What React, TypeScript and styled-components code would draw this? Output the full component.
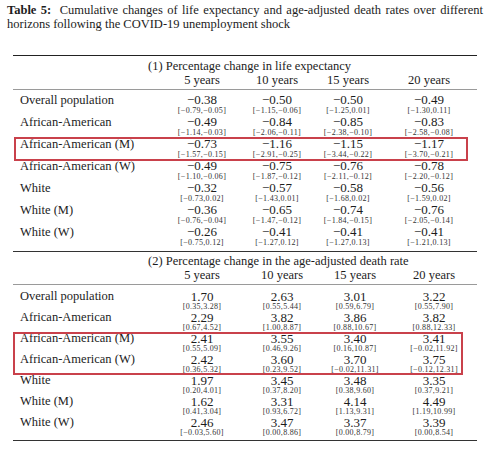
import React from 'react';
import styled, { createGlobalStyle } from 'styled-components';

type Cell = [string, string];

interface RowData {
  label: string;
  cells: Cell[];
}

const M = '\u2212';

const lifeRows: RowData[] = [
  { label: 'Overall population', cells: [[`${M}0.38`, `[${M}0.79,${M}0.05]`], [`${M}0.50`, `[${M}1.15,${M}0.06]`], [`${M}0.50`, `[${M}1.25,0.01]`], [`${M}0.49`, `[${M}1.30,0.11]`]] },
  { label: 'African-American', cells: [[`${M}0.49`, `[${M}1.14,${M}0.03]`], [`${M}0.84`, `[${M}2.06,${M}0.11]`], [`${M}0.85`, `[${M}2.38,${M}0.10]`], [`${M}0.83`, `[${M}2.58,${M}0.08]`]] },
  { label: 'African-American (M)', cells: [[`${M}0.73`, `[${M}1.57,${M}0.15]`], [`${M}1.16`, `[${M}2.91,${M}0.25]`], [`${M}1.15`, `[${M}3.44,${M}0.22]`], [`${M}1.17`, `[${M}3.70,${M}0.21]`]] },
  { label: 'African-American (W)', cells: [[`${M}0.49`, `[${M}1.10,${M}0.06]`], [`${M}0.75`, `[${M}1.87,${M}0.12]`], [`${M}0.76`, `[${M}2.11,${M}0.12]`], [`${M}0.78`, `[${M}2.20,${M}0.12]`]] },
  { label: 'White', cells: [[`${M}0.32`, `[${M}0.73,0.02]`], [`${M}0.57`, `[${M}1.43,0.01]`], [`${M}0.58`, `[${M}1.68,0.02]`], [`${M}0.56`, `[${M}1.59,0.02]`]] },
  { label: 'White (M)', cells: [[`${M}0.36`, `[${M}0.76,${M}0.04]`], [`${M}0.65`, `[${M}1.47,${M}0.12]`], [`${M}0.74`, `[${M}1.84,${M}0.15]`], [`${M}0.76`, `[${M}2.05,${M}0.14]`]] },
  { label: 'White (W)', cells: [[`${M}0.26`, `[${M}0.75,0.12]`], [`${M}0.41`, `[${M}1.27,0.12]`], [`${M}0.41`, `[${M}1.27,0.13]`], [`${M}0.41`, `[${M}1.21,0.13]`]] },
];

const deathRows: RowData[] = [
  { label: 'Overall population', cells: [['1.70', '[0.35,3.28]'], ['2.63', '[0.55,5.44]'], ['3.01', '[0.59,6.79]'], ['3.22', '[0.55,7.90]']] },
  { label: 'African-American', cells: [['2.29', '[0.67,4.52]'], ['3.82', '[1.00,8.87]'], ['3.86', '[0.88,10.67]'], ['3.82', '[0.88,12.33]']] },
  { label: 'African-American (M)', cells: [['2.41', '[0.55,5.09]'], ['3.55', '[0.46,9.26]'], ['3.40', '[0.16,10.87]'], ['3.41', `[${M}0.02,11.92]`]] },
  { label: 'African-American (W)', cells: [['2.42', '[0.36,5.32]'], ['3.60', '[0.23,9.52]'], ['3.70', `[${M}0.02,11.31]`], ['3.75', `[${M}0.12,12.31]`]] },
  { label: 'White', cells: [['1.97', '[0.20,4.01]'], ['3.45', '[0.37,8.20]'], ['3.48', '[0.38,9.60]'], ['3.35', '[0.37,9.21]']] },
  { label: 'White (M)', cells: [['1.62', '[0.41,3.04]'], ['3.31', '[0.93,6.72]'], ['4.14', '[1.13,9.31]'], ['4.49', '[1.19,10.99]']] },
  { label: 'White (W)', cells: [['2.46', `[${M}0.03,5.60]`], ['3.47', '[0.00,8.86]'], ['3.37', '[0.00,8.79]'], ['3.39', '[0.00,8.54]']] },
];

const horizons = ['5 years', '10 years', '15 years', '20 years'];

const lifeCols = '152px 74px 76px 66px 96px';
const deathCols = '152px 74px 86px 60px 98px';

const GlobalStyle = createGlobalStyle`
  body {
    margin: 0;
    background: #fff;
    color: #1c1c1c;
    font-family: "Liberation Serif", "DejaVu Serif", serif;
  }
`;

const Page = styled.div`
  width: 500px;
  height: 453px;
  padding: 3px 17px 0 7px;
  box-sizing: border-box;
  overflow: hidden;
`;

const Caption = styled.div`
  font-size: 12.5px;
  line-height: 14px;
`;

const CaptionLine = styled.div<{ $justify?: boolean }>`
  text-align: ${(p) => (p.$justify ? 'justify' : 'left')};
  text-align-last: ${(p) => (p.$justify ? 'justify' : 'left')};
  white-space: nowrap;
`;

const Bold = styled.b`
  margin-right: 4px;
`;

const Table = styled.div`
  width: 464px;
  margin: 24px 0 0 6px;
  border-top: 1px solid #222;
`;

const Section = styled.div<{ $last?: boolean }>`
  border-bottom: 1px solid #333;
  padding-bottom: ${(p) => (p.$last ? 2 : 3)}px;
`;

const SectionHead = styled.div<{ $top: number; $gap: number }>`
  padding-top: ${(p) => p.$top}px;
  border-bottom: 1px solid #9a9a9a;
  padding-bottom: 1px;
  margin-bottom: ${(p) => p.$gap}px;
`;

const SectionTitle = styled.div`
  font-size: 12.5px;
  line-height: 14px;
  padding-left: 135px;
`;

const Grid = styled.div<{ $cols: string }>`
  display: grid;
  grid-template-columns: ${(p) => p.$cols};
`;

const Horizon = styled.div`
  font-size: 12.5px;
  line-height: 15px;
  text-align: center;
`;

const Label = styled.div<{ $compact?: boolean }>`
  font-size: 12.5px;
  line-height: ${(p) => (p.$compact ? 11 : 12)}px;
  padding-left: 7px;
`;

const Cell = styled.div`
  display: flex;
  flex-direction: column;
  align-items: center;
`;

const Value = styled.span<{ $compact?: boolean }>`
  font-size: 13px;
  line-height: ${(p) => (p.$compact ? 11 : 12)}px;
`;

const Interval = styled.span`
  font-size: 8px;
  letter-spacing: 0.3px;
  line-height: 10px;
  color: #333;
`;

const Highlight = styled.div`
  position: relative;
`;

const HighlightBox = styled.div<{ $top: number; $left: number; $width: number; $height: number }>`
  position: absolute;
  top: ${(p) => p.$top}px;
  left: ${(p) => p.$left}px;
  width: ${(p) => p.$width}px;
  height: ${(p) => p.$height}px;
  border: 2px solid #c9414b;
  box-sizing: border-box;
  pointer-events: none;
`;

const Row: React.FC<{ row: RowData; cols: string; compact?: boolean }> = ({ row, cols, compact }) => (
  <Grid $cols={cols}>
    <Label $compact={compact}>{row.label}</Label>
    {row.cells.map(([v, ci], i) => (
      <Cell key={i}>
        <Value $compact={compact}>{v}</Value>
        <Interval>{ci}</Interval>
      </Cell>
    ))}
  </Grid>
);

const Head: React.FC<{ title: string; cols: string; top: number; gap: number }> = ({ title, cols, top, gap }) => (
  <SectionHead $top={top} $gap={gap}>
    <SectionTitle>{title}</SectionTitle>
    <Grid $cols={cols}>
      <div />
      {horizons.map((h) => (
        <Horizon key={h}>{h}</Horizon>
      ))}
    </Grid>
  </SectionHead>
);

export default function App() {
  return (
    <Page>
      <GlobalStyle />
      <Caption>
        <CaptionLine $justify>
          <Bold>Table 5:</Bold> Cumulative changes of life expectancy and age-adjusted death rates over different
        </CaptionLine>
        <CaptionLine>horizons following the COVID-19 unemployment shock</CaptionLine>
      </Caption>
      <Table>
        <Section>
          <Head title="(1) Percentage change in life expectancy" cols={lifeCols} top={3} gap={4} />
          {lifeRows.slice(0, 2).map((r) => (
            <Row key={r.label} row={r} cols={lifeCols} />
          ))}
          <Highlight>
            <HighlightBox $top={-1} $left={1} $width={454} $height={24} />
            <Row row={lifeRows[2]} cols={lifeCols} />
          </Highlight>
          {lifeRows.slice(3).map((r) => (
            <Row key={r.label} row={r} cols={lifeCols} />
          ))}
        </Section>
        <Section $last>
          <Head title="(2) Percentage change in the age-adjusted death rate" cols={deathCols} top={2} gap={6} />
          {deathRows.slice(0, 2).map((r) => (
            <Row key={r.label} row={r} cols={deathCols} compact />
          ))}
          <Highlight>
            <HighlightBox $top={-1} $left={0} $width={450} $height={43} />
            <Row row={deathRows[2]} cols={deathCols} compact />
            <Row row={deathRows[3]} cols={deathCols} compact />
          </Highlight>
          {deathRows.slice(4).map((r) => (
            <Row key={r.label} row={r} cols={deathCols} compact />
          ))}
        </Section>
      </Table>
    </Page>
  );
}
